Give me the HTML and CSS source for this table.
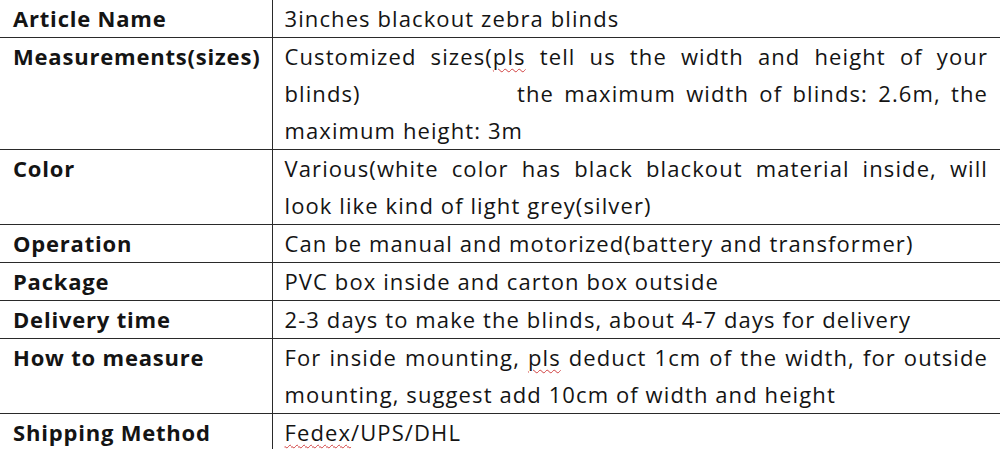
FILE: index.html
```html
<!DOCTYPE html>
<html>
<head>
<meta charset="utf-8">
<link rel="stylesheet" href="styles.css">
</head>
<body>
<table class="spec">
  <tr>
    <td class="key">Article Name</td>
    <td class="val"><div class="ln">3inches blackout zebra blinds</div></td>
  </tr>
  <tr>
    <td class="key">Measurements(sizes)</td>
    <td class="val">
      <div class="ln just">Customized sizes(<span class="sp">pls</span> tell us the width and height of your</div>
      <div class="ln split"><span>blinds)</span><span class="just tail">the maximum width of blinds: 2.6m, the</span></div>
      <div class="ln">maximum height: 3m</div>
    </td>
  </tr>
  <tr>
    <td class="key">Color</td>
    <td class="val">
      <div class="ln just">Various(white color has black blackout material inside, will</div>
      <div class="ln">look like kind of light grey(silver)</div>
    </td>
  </tr>
  <tr>
    <td class="key">Operation</td>
    <td class="val"><div class="ln">Can be manual and motorized(battery and transformer)</div></td>
  </tr>
  <tr>
    <td class="key">Package</td>
    <td class="val"><div class="ln">PVC box inside and carton box outside</div></td>
  </tr>
  <tr>
    <td class="key">Delivery time</td>
    <td class="val"><div class="ln">2-3 days to make the blinds, about 4-7 days for delivery</div></td>
  </tr>
  <tr>
    <td class="key">How to measure</td>
    <td class="val">
      <div class="ln just">For inside mounting, <span class="sp">pls</span> deduct 1cm of the width, for outside</div>
      <div class="ln">mounting, suggest add 10cm of width and height</div>
    </td>
  </tr>
  <tr class="last">
    <td class="key">Shipping Method</td>
    <td class="val"><div class="ln"><span class="sp">Fedex</span>/UPS/DHL</div></td>
  </tr>
</table>
</body>
</html>
```

FILE: styles.css
```css
html, body {
  margin: 0;
  padding: 0;
  background: #ffffff;
}
body {
  width: 1000px;
  height: 449px;
  overflow: hidden;
  font-family: "Open Sans", "Noto Sans", sans-serif;
  font-size: 22px;
  color: #141414;
}
.spec {
  border-collapse: collapse;
  width: 1000px;
  table-layout: fixed;
}
.spec td {
  padding: 0;
  vertical-align: top;
  border-bottom: 1px solid #2a2a2a;
}
.spec tr.last td {
  border-bottom: none;
}
.key {
  width: 272px;
  padding-left: 13px !important;
  box-sizing: border-box;
  font-weight: bold;
  letter-spacing: 0.8px;
  line-height: 37px;
  border-right: 1px solid #2a2a2a;
}
.val {
  padding-left: 12px !important;
  padding-right: 12px !important;
  letter-spacing: 1.1px;
}
.ln {
  line-height: 37px;
  height: 37px;
  white-space: nowrap;
}
.just {
  text-align: justify;
  text-align-last: justify;
  white-space: normal;
}
.split {
  display: flex;
  justify-content: space-between;
}
.tail {
  width: 471px;
  flex: 0 0 471px;
}
.sp {
  text-decoration: underline wavy #d04040 1px;
  text-underline-offset: 3px;
}
```
